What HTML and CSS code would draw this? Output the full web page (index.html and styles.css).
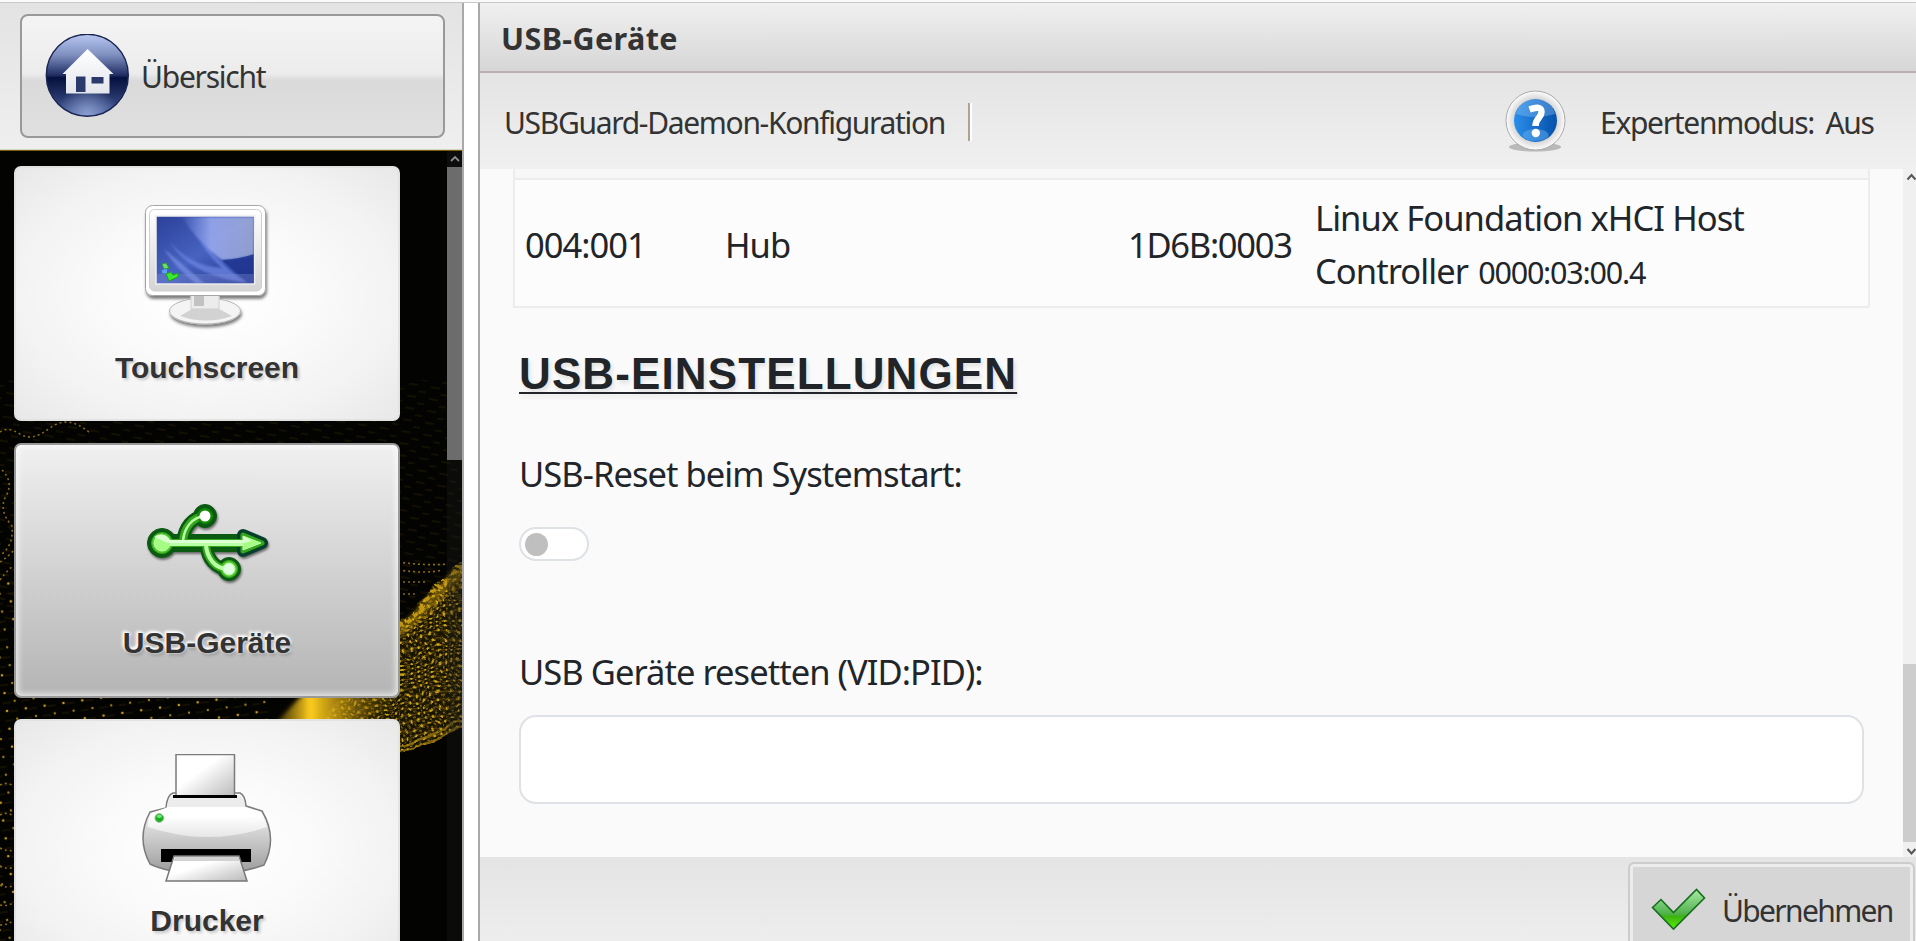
FILE: index.html
```html
<!DOCTYPE html>
<html lang="de">
<head>
    <meta charset="UTF-8">
    <meta name="viewport" content="width=device-width, initial-scale=1.0">
    <title>USB-Geräte</title>
    <link rel="stylesheet" href="styles.css">
</head>
<body>
    <div class="topline"></div>
    <div class="app">
        <aside class="sidebar">
            <div class="sidebar-header">
                <button class="home-button" type="button">
                    <svg class="home-icon" viewBox="45 34 84 84">
                        <defs>
                            <linearGradient id="ball" x1="0" y1="0" x2="0" y2="1">
                                <stop offset="0" stop-color="#b9c8f2"/>
                                <stop offset=".25" stop-color="#7f90c0"/>
                                <stop offset=".5" stop-color="#1f2d63"/>
                                <stop offset=".53" stop-color="#04113f"/>
                                <stop offset=".7" stop-color="#1c2a5c"/>
                                <stop offset="1" stop-color="#4a62a0"/>
                            </linearGradient>
                            <radialGradient id="ballGlow" cx=".5" cy="1" r=".38">
                                <stop offset="0" stop-color="#8c9fd0"/>
                                <stop offset="1" stop-color="#8c9fd0" stop-opacity="0"/>
                            </radialGradient>
                            <linearGradient id="house" x1="0" y1="0" x2="0" y2="1">
                                <stop offset="0" stop-color="#fff"/>
                                <stop offset="1" stop-color="#e3e6ec"/>
                            </linearGradient>
                        </defs>
                        <circle cx="87.3" cy="75.3" r="41" fill="url(#ball)" stroke="#1a2450" stroke-width="1.4"/>
                        <circle cx="87.3" cy="75.3" r="40" fill="url(#ballGlow)"/>
                        <path d="M87.6 49 L113.5 74 H109.5 V93.5 H66 V74 H62.5 Z" fill="url(#house)"/>
                        <path d="M76 76.5 h9.5 V92 H76 Z" fill="#2c3a6b"/>
                        <rect x="91.5" y="77" width="12" height="6.5" fill="#2c3a6b"/>
                    </svg>
                    <span class="home-label">Übersicht</span>
                </button>
            </div>
            <div class="menu">
                <svg class="menu-bg" viewBox="0 151 462 790" width="462" height="790">
                    <defs>
                        <pattern id="dots" width="8" height="6" patternUnits="userSpaceOnUse" patternTransform="rotate(-14)">
                            <rect width="8" height="6" fill="#191401"/>
                            <rect y="1" width="8" height="1.3" fill="#57450a"/>
                            <circle cx="2" cy="1.7" r="1.4" fill="#d9ab17"/>
                            <circle cx="6" cy="4.6" r="1.1" fill="#8c6d10"/>
                        </pattern>
                        <pattern id="sparse" width="19" height="18" patternUnits="userSpaceOnUse" patternTransform="rotate(-8)">
                            <circle cx="3" cy="3" r="1.3" fill="#c99d16"/>
                            <circle cx="12" cy="12" r="1.2" fill="#a27f12"/>
                            <path d="M6 4 h8 M0 13 h8" stroke="#221b04" stroke-width="1"/>
                        </pattern>
                        <pattern id="faint" width="22" height="12" patternUnits="userSpaceOnUse" patternTransform="rotate(9)">
                            <path d="M2 3 h9 M13 9 h7" stroke="#231c04" stroke-width="1.2"/>
                        </pattern>
                        <linearGradient id="flare" x1="250" y1="0" x2="400" y2="0" gradientUnits="userSpaceOnUse">
                            <stop offset="0" stop-color="#5c4706" stop-opacity="0"/>
                            <stop offset=".22" stop-color="#a07c10" stop-opacity=".6"/>
                            <stop offset=".4" stop-color="#ffcf1c"/>
                            <stop offset=".55" stop-color="#dfae17" stop-opacity=".8"/>
                            <stop offset="1" stop-color="#5c4706" stop-opacity="0"/>
                        </linearGradient>
                        <filter id="wave" x="-5%" y="-5%" width="110%" height="110%">
                            <feTurbulence type="fractalNoise" baseFrequency=".04" numOctaves="2" seed="4" result="n"/>
                            <feDisplacementMap in="SourceGraphic" in2="n" scale="16" xChannelSelector="R" yChannelSelector="G"/>
                        </filter>
                        <filter id="blur"><feGaussianBlur stdDeviation="2"/></filter>
                    </defs>
                    <rect x="0" y="151" width="462" height="790" fill="#030301"/>
                    <rect x="0" y="380" width="462" height="245" fill="url(#faint)"/>
                    <rect x="0" y="580" width="270" height="361" fill="url(#sparse)"/>
                    <g class="trails">
                        <path d="M0 432 q8 -6 20 2 t30 -6 t40 5"/>
                        <path d="M2 470 q12 12 4 26 t6 30 q2 18 -10 28"/>
                        <path d="M0 562 q9 -6 14 -12 M0 580 q9 -12 14 -14"/>
                        <path d="M0 785 q8 -4 14 2 M0 815 q8 -4 14 2 M0 848 q8 4 14 2 M0 866 q8 4 14 1 M0 885 q8 4 14 0 M0 905 q8 2 14 -3 M0 925 q8 0 14 -5"/>
                        <path d="M398 562 q30 4 50 2 M398 570 q30 4 44 0 M398 582 h30 M398 594 h20"/>
                    </g>
                    <g filter="url(#wave)">
                        <path d="M320 724 L398 620 C420 606 438 576 470 556 V726 Q430 742 398 755 L380 750 Z" fill="url(#dots)"/>
                        <path d="M398 625 C420 611 438 581 470 563" fill="none" stroke="#d8a814" stroke-width="4" stroke-dasharray="5 4" opacity=".8"/>
                        <path d="M398 634 C425 618 440 596 470 578" fill="none" stroke="#b88e12" stroke-width="4" stroke-dasharray="3 3" opacity=".6"/>
                        <path d="M398 752 Q430 742 470 724 M398 745 Q430 735 470 716" fill="none" stroke="#a58012" stroke-width="2.500" opacity=".7"/>
                    </g>
                    <path d="M398 632 C420 618 438 588 466 570" fill="none" stroke="#d8a814" stroke-width="10" filter="url(#blur)" opacity=".4"/>
                    <path d="M275 724 L305 692 H400 V706 L350 724Z" fill="url(#flare)" filter="url(#blur)"/>
                    <rect x="447" y="151" width="15" height="790" fill="#1c1c1c" opacity=".35"/>
                </svg>
                <nav class="tiles">
                    <button class="tile" type="button">
                        <svg class="tile-icon" viewBox="140 201 134 134">
                            <defs>
                                <linearGradient id="frame" x1="0" y1="0" x2="0" y2="1">
                                    <stop offset="0" stop-color="#fff"/>
                                    <stop offset="1" stop-color="#d4d4d4"/>
                                </linearGradient>
                                <linearGradient id="screen" x1="0" y1="0" x2="1" y2="1">
                                    <stop offset="0" stop-color="#2b4099"/>
                                    <stop offset=".5" stop-color="#4763c0"/>
                                    <stop offset="1" stop-color="#1a2f88"/>
                                </linearGradient>
                                <linearGradient id="shine" x1="0" y1="0" x2="1" y2="0">
                                    <stop offset="0" stop-color="#8ea2f5" stop-opacity=".1"/>
                                    <stop offset=".4" stop-color="#9dadf0"/>
                                    <stop offset="1" stop-color="#a0abd4"/>
                                </linearGradient>
                                <filter id="soft" x="-20%" y="-20%" width="140%" height="140%">
                                    <feDropShadow dx="1" dy="3" stdDeviation="1.8" flood-color="#000" flood-opacity=".5"/>
                                </filter>
                                <filter id="haze"><feGaussianBlur stdDeviation="1.2"/></filter>
                                <clipPath id="screenClip"><rect x="157" y="217" width="96.500" height="66"/></clipPath>
                            </defs>
                            <g filter="url(#soft)">
                                <ellipse cx="205" cy="311" rx="35.500" ry="13" fill="#f4f4f4" stroke="#b5b5b5"/>
                                <path d="M180 316 L192 309 H219 L232 316 Q206 325 180 316Z" fill="#d2d2d2"/>
                                <rect x="191" y="290" width="28" height="19" fill="#ececec" stroke="#cfcfcf"/>
                                <rect x="194" y="290" width="10" height="16" fill="#c2c2c2"/>
                                <rect x="145.500" y="205.500" width="120" height="90" rx="7" fill="#fff" stroke="#a5a5a5"/>
                            </g>
                            <rect x="149.500" y="209.500" width="112" height="81.500" rx="5" fill="url(#frame)" stroke="#cfcfcf"/>
                            <rect x="156" y="216" width="98.500" height="68" fill="url(#screen)" stroke="#eee" stroke-width="1.500"/>
                            <g clip-path="url(#screenClip)">
                                <g filter="url(#haze)">
                                    <path d="M182 217 H254 V255 Q235 260 222 260 Q195 240 182 217Z" fill="url(#shine)" opacity=".85"/>
                                    <path d="M195 230 Q215 262 248 283 Q190 276 170 242 Q190 266 222 268 Q202 250 195 230Z" fill="#6c86e2" opacity=".75"/>
                                    <path d="M164 249 Q180 262 205 284 H196 Q176 268 164 249Z" fill="#7a92e6" opacity=".7"/>
                                </g>
                                <path d="M222 260 Q240 259 254 254 V284 H250 Q236 272 222 260Z" fill="#1f358f" opacity=".8"/>
                                <rect x="157" y="274" width="97" height="9" fill="#8090d8" opacity=".35"/>
                            </g>
                            <path d="M162 264 l4 -1 3 5 -5 1z" fill="#6fe06a" stroke="#2f9e38"/>
                            <path d="M162 270 l5 -1 v5 l-5 -1z" fill="#5d9ff2"/>
                            <path d="M166 274 l5 -2 2 3 5 -2 v4 l-9 4z" fill="#39e830" stroke="#1fa01c"/>
                        </svg>
                        <span class="tile-label touch">Touchscreen</span>
                    </button>
                    <button class="tile active" type="button">
                        <svg class="tile-icon" viewBox="140 478 134 134">
                            <defs>
                                <g id="usb">
                                    <path d="M162 543 H245" fill="none"/>
                                    <path d="M183 541 C184 528 192 517 205 516" fill="none"/>
                                    <path d="M206 545 C207 558 215 569 228 569" fill="none"/>
                                </g>
                            </defs>
                            <g stroke="#0a5a12" fill="#0a5a12" stroke-linejoin="round" class="usb-shadow">
                                <path d="M162 543 H245" stroke-width="18"/>
                                <path d="M183 541 C184 528 192 517 205 516 M206 545 C207 558 215 569 228 569" stroke-width="13" fill="none"/>
                                <circle cx="162" cy="543" r="14.500"/>
                                <circle cx="205" cy="516" r="11.500"/>
                                <circle cx="229" cy="569" r="11.500"/>
                                <path d="M243 535 V551 L262 543Z" stroke-width="12" stroke="#063f2c"/>
                            </g>
                            <g stroke="#35a51c" fill="#4fc52c" stroke-linejoin="round">
                                <use href="#usb" stroke-width="8"/>
                                <circle cx="162" cy="543" r="10.500"/>
                                <circle cx="205" cy="516" r="7.500" fill="#118a08" stroke="#118a08"/>
                                <circle cx="229" cy="569" r="8.500"/>
                                <path d="M243 535 V551 L262 543Z" stroke-width="5"/>
                            </g>
                            <g stroke="#b9ffa5" fill="#a6fb84">
                                <path d="M162 543 H245" stroke-width="6"/>
                                <path d="M183 541 C184 528 192 517 205 516" stroke-width="2.500" fill="none"/>
                                <path d="M206 545 C207 558 215 569 228 569" stroke-width="4" fill="none"/>
                                <circle cx="162" cy="543" r="8"/>
                                <circle cx="229" cy="569" r="6" fill="#e0ffe0"/>
                                <path d="M243 536 V550 L261 543Z"/>
                            </g>
                            <path d="M154 537 Q162 531 170 540 H243 V536 L252 541 L244 543 H168Z" fill="#e6ffe0" opacity=".8"/>
                            <circle cx="205" cy="516" r="5.500" fill="#fff"/>
                        </svg>
                        <span class="tile-label usb">USB-Geräte</span>
                    </button>
                    <button class="tile" type="button">
                        <svg class="tile-icon" viewBox="140 754 134 134">
                            <defs>
                                <linearGradient id="paper" x1="0" y1="0" x2="1" y2="1">
                                    <stop offset=".4" stop-color="#fff"/>
                                    <stop offset="1" stop-color="#b9b9b9"/>
                                </linearGradient>
                                <linearGradient id="printer" x1="0" y1="0" x2="0" y2="1">
                                    <stop offset="0" stop-color="#fff"/>
                                    <stop offset=".4" stop-color="#dedede"/>
                                    <stop offset="1" stop-color="#9f9f9f"/>
                                </linearGradient>
                                <linearGradient id="gloss" x1="0" y1="0" x2="0" y2="1">
                                    <stop offset=".3" stop-color="#fff"/>
                                    <stop offset="1" stop-color="#e6e6e6"/>
                                </linearGradient>
                            </defs>
                            <g stroke="#7b7b7b" stroke-width="1.500" stroke-linejoin="round">
                                <path d="M166 808 Q167 795 173 793 H240 Q245 795 246 806 L262 811 Q278 838 264 865 Q250 870 240 871 H172 Q158 868 150 864 Q136 838 150 812Z" fill="url(#printer)"/>
                                <path d="M176 754.500 H234.500 V797 H176Z" fill="url(#paper)"/>
                            </g>
                            <path d="M168 807 Q168 796 173 795 H239 Q244 797 245 807Z" fill="#ececec"/>
                            <path d="M148 827 Q147 818 152 813 L168 807 H245 L261 812 Q266 820 267 827 Q208 847 148 827Z" fill="url(#gloss)"/>
                            <rect x="173" y="795" width="64" height="3" fill="#000"/>
                            <rect x="161" y="849" width="90" height="13" fill="#000"/>
                            <path d="M174 856 H239 L247 881 H166Z" fill="url(#paper)" stroke="#777" stroke-width="1.500"/>
                            <path d="M175 857 H238 L240 861 H174Z" fill="#d2d2d2"/>
                            <circle cx="159.300" cy="818" r="4.300" fill="#17b21b" stroke="#8bb98b"/>
                            <ellipse cx="159.300" cy="816.300" rx="2.600" ry="1.600" fill="#7be57d"/>
                        </svg>
                        <span class="tile-label printer">Drucker</span>
                    </button>
                </nav>
                <div class="menu-scroll">
                    <div class="menu-scroll-up">
                        <svg viewBox="0 0 15 16" width="15" height="16"><path d="M4 10 L8 6 L12 10" fill="none" stroke="#8a8a8a" stroke-width="1.800"/></svg>
                    </div>
                    <div class="menu-scroll-thumb"></div>
                </div>
            </div>
        </aside>

        <main class="panel">
            <header class="titlebar"><h1>USB-Geräte</h1></header>
            <div class="toolbar">
                <span class="tool-link">USBGuard-Daemon-Konfiguration</span>
                <span class="divider"></span>
                <svg class="help-icon" viewBox="1503 88 66 68">
                    <defs>
                        <radialGradient id="ring">
                            <stop offset=".68" stop-color="#cfcfcf"/>
                            <stop offset="1" stop-color="#fdfdfd"/>
                        </radialGradient>
                        <linearGradient id="blue" x1="0" y1="0" x2="1" y2="0">
                            <stop offset="0" stop-color="#2a8fea"/>
                            <stop offset="1" stop-color="#0550aa"/>
                        </linearGradient>
                    </defs>
                    <ellipse cx="1535" cy="147" rx="26" ry="4.500" fill="#000" opacity=".22"/>
                    <circle cx="1535.500" cy="120.500" r="29.500" fill="url(#ring)" stroke="#aaa"/>
                    <circle cx="1535.500" cy="120.500" r="21.500" fill="url(#blue)"/>
                    <path d="M1516 114 A20 20 0 0 1 1555 114 Q1536 120 1516 114Z" fill="#9cc8f5" opacity=".35"/>
                    <ellipse cx="1535.500" cy="135" rx="13" ry="6" fill="#6db5f2" opacity=".45"/>
                    <path d="M1529.500 109.500 Q1541.500 105 1541.500 112 C1541.500 118 1535.500 118 1535.500 126" fill="none" stroke="#fff" stroke-width="6.500"/>
                    <circle cx="1535.800" cy="133" r="4.200" fill="#fff"/>
                </svg>
                <span class="expert">Expertenmodus: Aus</span>
            </div>
            <div class="body">
                <div class="content">
                    <table class="devices">
                        <colgroup><col class="c-bus"><col class="c-type"><col class="c-id"><col></colgroup>
                        <tr class="cut"><td colspan="4"></td></tr>
                        <tr>
                            <td class="bus">004:001</td>
                            <td>Hub</td>
                            <td class="vid">1D6B:0003</td>
                            <td class="desc">Linux Foundation xHCI Host<br>Controller <small>0000:03:00.4</small></td>
                        </tr>
                    </table>
                    <section class="settings">
                        <h2>USB-EINSTELLUNGEN</h2>
                        <p class="label-reset">USB-Reset beim Systemstart:</p>
                        <div class="switch"><span class="knob"></span></div>
                        <p class="label-vid">USB Geräte resetten (VID:PID):</p>
                        <input class="vid-input" type="text">
                    </section>
                </div>
                <div class="scroll">
                    <svg viewBox="0 0 13 16" width="13" height="16"><path d="M4.500 10.500 L8.500 6 L12.500 10.500" fill="none" stroke="#555" stroke-width="2"/></svg>
                    <div class="scroll-thumb"></div>
                    <svg viewBox="0 0 13 15" width="13" height="15"><path d="M4.500 7 L8.500 11.500 L12.500 7" fill="none" stroke="#555" stroke-width="2"/></svg>
                </div>
            </div>
            <footer class="footer">
                <button class="apply" type="button">
                    <svg class="check" viewBox="1651 888 56 44">
                        <defs>
                            <linearGradient id="tick" x1="0" y1="0" x2="0" y2="1">
                                <stop offset="0" stop-color="#a8eba8"/>
                                <stop offset=".62" stop-color="#4fb04a"/>
                                <stop offset=".68" stop-color="#3cb310"/>
                                <stop offset="1" stop-color="#5cf005"/>
                            </linearGradient>
                        </defs>
                        <path d="M1652.500 907.500 L1661 899.500 L1673.500 912.500 L1696.500 889.500 L1704.500 898 L1673.500 929Z" fill="url(#tick)" stroke="#166e1d" stroke-width="1.600"/>
                    </svg>
                    <span class="apply-label">Übernehmen</span>
                </button>
            </footer>
        </main>
    </div>
</body>
</html>
```

FILE: styles.css
```css
* {
    box-sizing: border-box;
}
body {
    margin: 0;
    height: 941px;
    overflow: hidden;
    display: flex;
    flex-direction: column;
    background: #fff;
    color: #333;
    font-family: "Noto Sans", "Open Sans", sans-serif;
    font-size: 30px;
}
button {
    font: inherit;
    color: inherit;
    padding: 0;
    border: none;
    background: none;
}
svg {
    display: block;
    flex: none;
}
.topline {
    height: 3px;
    flex: none;
    background: #fafafa;
    border-bottom: 1px solid #c8c8c8;
}
.app {
    flex: 1;
    min-height: 0;
    display: flex;
    gap: 14px;
}

/* sidebar */
.sidebar {
    width: 464px;
    flex: none;
    display: flex;
    flex-direction: column;
    border-right: 2px solid #a9a9a9;
}
.sidebar-header {
    height: 147px;
    flex: none;
    padding: 11px 17px 0 20px;
    background: linear-gradient(#e3e3e3, #efefef);
    border-bottom: 1px solid #d6d3c4;
}
.home-button {
    width: 425px;
    height: 124px;
    display: flex;
    align-items: center;
    padding-left: 23px;
    border: 2px solid #999;
    border-radius: 8px;
    background: linear-gradient(#f4f4f4, #ececec 48%, #dadada 54%, #e0e0e0);
}
.home-icon {
    width: 84px;
    height: 84px;
}
.home-label {
    margin-left: 12px;
    letter-spacing: -1.25px;
}
.menu {
    flex: 1;
    min-height: 0;
    display: grid;
    grid-template-columns: 1fr 15px;
    grid-template-rows: 790px;
    border-top: 1px solid #7a5f0a;
    overflow: hidden;
}
.menu-bg {
    grid-area: 1 / 1 / 2 / 3;
}
.trails path {
    fill: none;
    stroke: #8a6c10;
    stroke-width: 1.6;
    stroke-dasharray: 2 3;
}
.tiles {
    grid-area: 1 / 1;
    display: flex;
    flex-direction: column;
    gap: 21.5px;
    padding: 15px 0 0 14px;
}
.tile {
    width: 386px;
    height: 255px;
    flex: none;
    display: flex;
    flex-direction: column;
    align-items: center;
    padding-top: 33px;
    border: 2px solid rgba(225, 225, 225, 0.9);
    border-radius: 7px;
    background: radial-gradient(ellipse at center, #fff 10%, #fafafa 40%, #f3f3f3 70%, #e8e8e8);
}
.tile.active {
    border-color: #999;
    background: linear-gradient(#f0f0f0, #b4b4b4);
    box-shadow: inset 0 0 6px 2px rgba(255, 255, 255, 0.75);
}
.tile-icon {
    width: 134px;
    height: 134px;
}
.tile-label {
    margin-top: 15px;
    line-height: 36px;
    font-family: "Liberation Sans", Arial, sans-serif;
    font-weight: bold;
    text-shadow: 2px 2px 3px rgba(0, 0, 0, 0.2), -1px -1px 3px #fff;
}
.tile-label.touch {
    letter-spacing: -0.05px;
}
.tile.active .tile-label {
    margin-top: 13px;
    text-shadow: 2px 3px 3px rgba(0, 0, 0, 0.15), -2px -2px 3px #fff, 1px -1px 3px #fff, 0 0 2px #fff;
}
.usb-shadow {
    filter: drop-shadow(1px 2px 1px rgba(0, 0, 0, 0.5));
}
.menu-scroll {
    grid-area: 1 / 2;
}
.menu-scroll-up {
    height: 16px;
    background: #0d0d0d;
}
.menu-scroll-thumb {
    height: 293px;
    background: #6c6c6c;
}

/* main panel */
.panel {
    flex: 1;
    min-width: 0;
    display: flex;
    flex-direction: column;
    border-left: 2px solid #a9a9a9;
}
.titlebar {
    height: 70px;
    flex: none;
    display: flex;
    align-items: center;
    padding: 2px 0 0 21px;
    background: linear-gradient(#f0f0f0, #d6d6d6);
    border-bottom: 2px solid #bcb0ae;
}
h1 {
    margin: 0;
    font-size: 30.5px;
    line-height: 40px;
    letter-spacing: 0.4px;
}
.toolbar {
    height: 96px;
    flex: none;
    display: flex;
    align-items: center;
    padding: 2px 42px 0 24px;
    background: linear-gradient(#e4e4e4, #f0f0f0);
}
.tool-link {
    width: 464px;
    letter-spacing: -1.32px;
    white-space: nowrap;
}
.divider {
    width: 4px;
    height: 38px;
    border-left: 2px solid #aaa58c;
    background: #fff;
}
.help-icon {
    width: 66px;
    height: 68px;
    margin-left: auto;
    margin-right: 31px;
}
.expert {
    width: 274px;
    white-space: nowrap;
    letter-spacing: -1.3px;
    word-spacing: 5px;
}
.body {
    height: 688px;
    flex: none;
    display: flex;
    background: #fafafa;
    color: #212529;
    font-size: 34.5px;
    line-height: 53px;
}
.content {
    flex: 1;
    min-width: 0;
    padding: 0 33px;
}
.devices {
    width: 1357px;
    table-layout: fixed;
    border-collapse: separate;
    border-spacing: 0;
    border: 2px solid #ececec;
    border-top: none;
    background: #fcfcfc;
}
.c-bus {
    width: 198px;
}
.c-type {
    width: 403px;
}
.c-id {
    width: 187px;
}
.devices td {
    height: 126px;
    padding: 3px 0 0 12px;
    white-space: nowrap;
    letter-spacing: -1px;
}
.devices .bus {
    padding-left: 10px;
}
.devices .vid {
    letter-spacing: -1.3px;
}
.devices .desc {
    letter-spacing: -0.93px;
}
.devices .cut td {
    height: 11px;
    padding: 0;
    background: #f7f7f7;
    border-bottom: 2px solid #ececec;
}
.devices small {
    font-size: 30.5px;
    margin-left: 2px;
    letter-spacing: -1.2px;
}
.settings {
    padding: 39px 0 0 6px;
}
h2 {
    margin: 0;
    font-family: "Liberation Sans", Arial, sans-serif;
    font-size: 44px;
    letter-spacing: 1.12px;
    text-decoration: underline;
    text-decoration-thickness: 2px;
    text-underline-offset: 3px;
    text-decoration-skip-ink: none;
    text-shadow: 2px 3px 4px rgba(0, 0, 0, 0.1);
}
.settings p {
    margin: 0;
    letter-spacing: -0.95px;
}
.settings .label-reset {
    margin-top: 47px;
}
.switch {
    width: 70px;
    height: 34px;
    margin-top: 27px;
    padding: 4px;
    border: 2px solid #dee2e6;
    border-radius: 17px;
    background: #fff;
}
.knob {
    display: block;
    width: 23px;
    height: 23px;
    border-radius: 50%;
    background: #bfbfbf;
}
.settings .label-vid {
    margin-top: 84px;
}
.vid-input {
    display: block;
    width: 1345px;
    height: 89px;
    margin-top: 17px;
    border: 2px solid #dee2e6;
    border-radius: 17px;
    background: #fff;
}
.scroll {
    width: 13px;
    display: flex;
    flex-direction: column;
    background: #f0f0f0;
}
.scroll-thumb {
    height: 178px;
    margin-top: auto;
    background: #cdcdcd;
}
.footer {
    flex: 1;
    display: flex;
    justify-content: flex-end;
    padding: 5px 1px 0 0;
    overflow: hidden;
    background: linear-gradient(#e4e4e4, #ededed);
}
.apply {
    width: 287px;
    height: 100px;
    flex: none;
    display: flex;
    align-items: flex-start;
    padding: 24px 0 0 21px;
    border: 2px solid #ccc;
    border-radius: 6px;
    background: #d6d6d6;
    box-shadow: inset 0 0 0 3px #ececec;
}
.check {
    width: 56px;
    height: 44px;
}
.apply-label {
    margin: 3px 0 0 15px;
    line-height: 40px;
    letter-spacing: -1.65px;
}
```
